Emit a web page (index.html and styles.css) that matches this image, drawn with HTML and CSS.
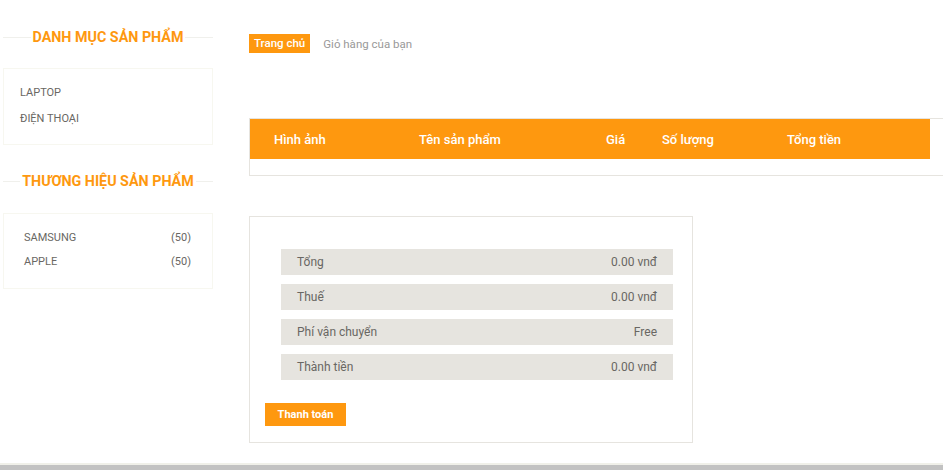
FILE: index.html
```html
<!DOCTYPE html>
<html lang="vi">
<head>
    <meta charset="UTF-8">
    <title>Giỏ hàng</title>
    <link rel="stylesheet" href="styles.css">
</head>
<body>

<div class="page">
    <!-- Sidebar -->
    <aside class="sidebar">
        <h2 class="side-title"><span>DANH MỤC SẢN PHẨM</span></h2>
        <div class="side-box category-box">
            <a href="#">LAPTOP</a>
            <a href="#">ĐIỆN THOẠI</a>
        </div>

        <h2 class="side-title"><span>THƯƠNG HIỆU SẢN PHẨM</span></h2>
        <div class="side-box brand-box">
            <a href="#"><span>SAMSUNG</span><span>(50)</span></a>
            <a href="#"><span>APPLE</span><span>(50)</span></a>
        </div>
    </aside>

    <!-- Cart -->
    <main class="cart">
        <div class="breadcrumb">
            <a href="#" class="crumb-home">Trang chủ</a>
            <span class="crumb-current">Giỏ hàng của bạn</span>
        </div>

        <div class="cart-table">
            <div class="cart-head">
                <span>Hình ảnh</span>
                <span>Tên sản phẩm</span>
                <span>Giá</span>
                <span>Số lượng</span>
                <span>Tổng tiền</span>
            </div>
            <div class="cart-body"></div>
        </div>

        <div class="total-box">
            <ul class="total-list">
                <li><span>Tổng</span><span>0.00 vnđ</span></li>
                <li><span>Thuế</span><span>0.00 vnđ</span></li>
                <li><span>Phí vận chuyển</span><span>Free</span></li>
                <li><span>Thành tiền</span><span>0.00 vnđ</span></li>
            </ul>
            <button class="checkout">Thanh toán</button>
        </div>
    </main>
</div>

<footer class="footer"></footer>

</body>
</html>
```

FILE: styles.css
```css
html, body {
    overflow: hidden;
}

body {
    margin: 0;
    font-family: Roboto, "Noto Sans", sans-serif;
    color: #696763;
    background-color: #fff;
}

a {
    text-decoration: none;
    color: inherit;
}

.page {
    display: flex;
    align-items: flex-start;
}

/* Sidebar */
.sidebar {
    width: 210px;
    margin-left: 3px;
    padding-top: 27px;
    flex-shrink: 0;
}

.side-title {
    position: relative;
    margin: 0;
    height: 20px;
    text-align: center;
    font-size: 14.3px;
    font-weight: 700;
    line-height: 20px;
    color: #fe980f;
}

.side-title::before {
    content: "";
    position: absolute;
    left: 0;
    right: 0;
    top: 10px;
    border-top: 1px solid #f0f0ec;
}

.side-title span {
    position: relative;
    background-color: #fff;
    padding: 0 2px;
}

.side-box {
    border: 1px solid #f7f7f0;
    font-size: 11px;
}

.side-box a {
    display: flex;
    justify-content: space-between;
}

.category-box {
    margin: 21px 0 26px;
    padding: 11px 16px 12px;
}

.category-box a {
    line-height: 26px;
}

.brand-box {
    margin-top: 22px;
    padding: 12px 21px 14px 20px;
}

.brand-box a {
    line-height: 24px;
}

/* Cart */
.cart {
    flex: 1;
    margin-left: 36px;
    padding-top: 34px;
    min-width: 0;
}

.breadcrumb {
    display: flex;
    align-items: center;
    gap: 13px;
    font-size: 11.5px;
    height: 19px;
}

.crumb-home {
    background-color: #fe980f;
    color: #fff;
    font-weight: 500;
    line-height: 19px;
    padding: 0 5px;
}

.crumb-current {
    color: #999;
}

.cart-table {
    width: 720px;
    margin-top: 65px;
    border-top: 1px solid #e6e4df;
    border-bottom: 1px solid #e6e4df;
    border-left: 1px solid #e6e4df;
}

.cart-head {
    display: grid;
    grid-template-columns: 145px 187px 56px 125px 1fr;
    width: 680px;
    box-sizing: border-box;
    height: 40px;
    padding-left: 24px;
    align-items: center;
    background-color: #fe980f;
    color: #fff;
    font-size: 13px;
    font-weight: 500;
}

.cart-body {
    height: 16px;
}

.total-box {
    width: 427px;
    margin-top: 40px;
    border: 1px solid #e6e4df;
    padding: 32px 0 16px 15px;
}

.total-list {
    list-style: none;
    margin: 0 19px 0 16px;
    padding: 0;
}

.total-list li {
    display: flex;
    justify-content: space-between;
    align-items: center;
    height: 26px;
    margin-bottom: 9px;
    padding: 0 16px;
    background-color: #e6e4df;
    font-size: 12px;
}

.checkout {
    margin-top: 14px;
    width: 81px;
    height: 23px;
    border: none;
    background-color: #fe980f;
    color: #fff;
    font-family: Roboto, "Noto Sans", sans-serif;
    font-size: 11px;
    font-weight: 700;
    padding: 0;
}

.footer {
    margin-top: 20px;
    border-top: 2px solid #f0f0e9;
    height: 20px;
    background-color: #c2c2c2;
}
```
